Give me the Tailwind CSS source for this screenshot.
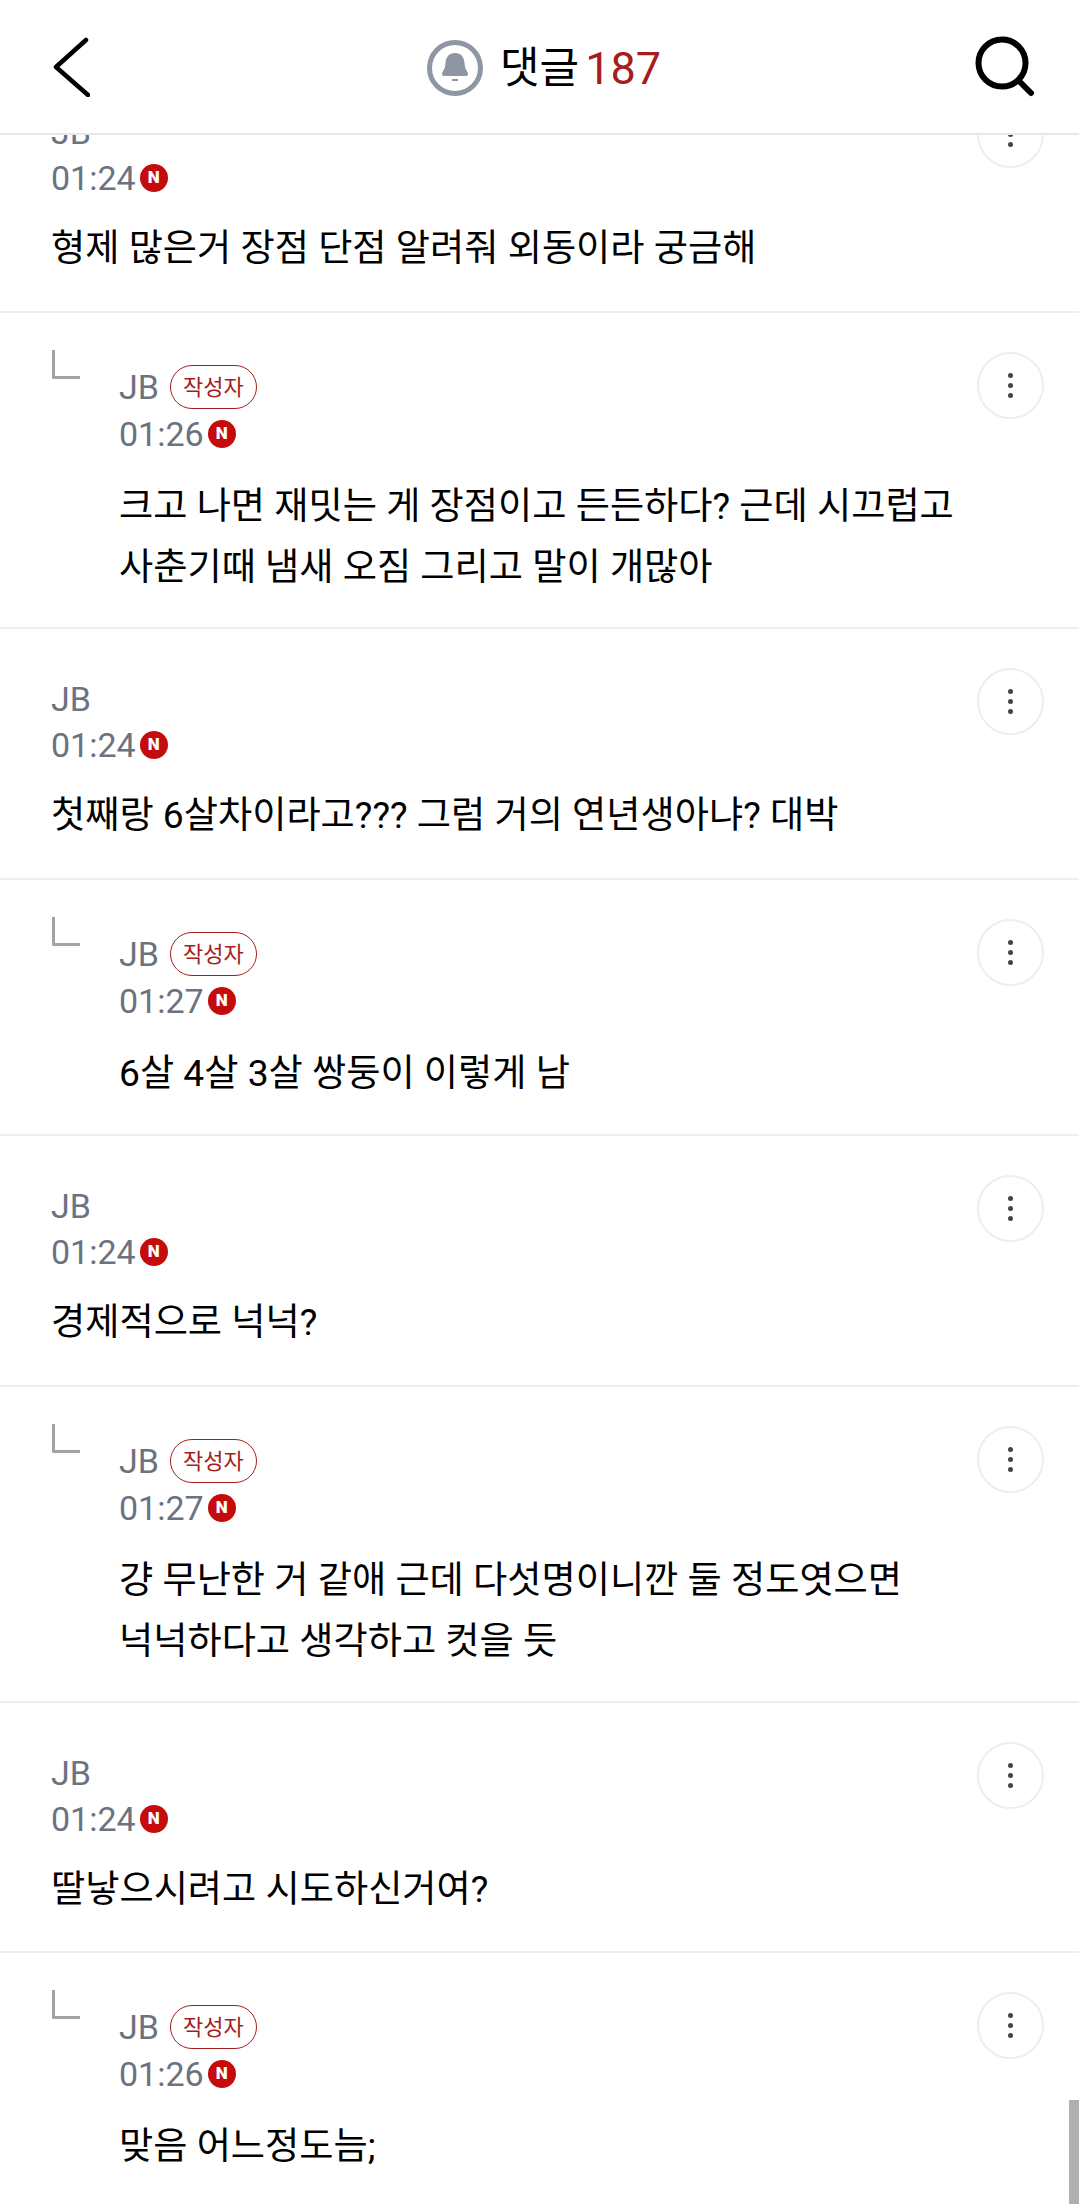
<!DOCTYPE html>
<html lang="ko">
<head>
<meta charset="UTF-8">
<title>댓글</title>
<script src="https://cdn.jsdelivr.net/npm/@tailwindcss/browser@4"></script>
</head>
<body class="bg-white h-[2204px] overflow-hidden relative font-['Roboto','Noto_Sans_CJK_KR',sans-serif] text-black">
<header class="h-[135px] border-b-2 border-[#e8e8e8] flex items-center justify-between pl-[52px] pr-[42px] bg-white relative z-10">
  <svg class="w-[38px] h-[60px]" viewBox="0 0 38 60" fill="none" stroke="#000" stroke-width="4.500" stroke-linecap="round" stroke-linejoin="round"><path d="M34 3 4 30l32 28"/></svg>
  <div class="flex items-center absolute left-[427px] top-[40px]">
    <svg class="w-[56px] h-[56px]" viewBox="0 0 56 56"><circle cx="28" cy="28" r="25.500" fill="none" stroke="#8e95a3" stroke-width="5"/><path d="M28 13c-6 0-9 4-9.500 10-.4 4-1 6-3 9-1 1.800-.5 4 1.500 4h22c2 0 2.500-2.200 1.500-4-2-3-2.600-5-3-9C37 17 34 13 28 13z" fill="#8e95a3"/><rect x="25" y="39" width="6" height="2" fill="#8e95a3"/></svg>
    <span class="ml-[17px] text-[43px] leading-none">댓글</span>
    <span class="ml-[6px] text-[45px] leading-none text-[#a51d1d]">187</span>
  </div>
  <svg class="w-[62px] h-[62px]" viewBox="0 0 62 62" fill="none" stroke="#000" stroke-width="6" stroke-linecap="round"><circle cx="27" cy="27" r="23.500"/><path d="M44 45l12 12"/></svg>
</header>

<main class="-mt-[73px]">
  <section class="h-[251px] border-b-2 border-[#eeeeee] relative pt-[48px] pl-[51px]">
    <div class="text-[34px] leading-[44px] text-[#6b7280]">JB</div>
    <div class="flex items-center gap-[4px] h-[48px]"><span class="text-[34px] text-[#6b7280]">01:24</span><span class="w-[28px] h-[28px] rounded-full bg-[#c50c0c] text-white text-[17px] font-black flex items-center justify-center">N</span></div>
    <p class="mt-[16px] text-[37.200px] leading-[61px]">형제 많은거 장점 단점 알려줘 외동이라 궁금해</p>
    <div class="absolute right-[35px] top-[39px] w-[67px] h-[67px] rounded-full border-2 border-[#eeeeee] flex flex-col items-center justify-center gap-[4.500px]"><i class="w-[5.500px] h-[5.500px] rounded-full bg-[#444]"></i><i class="w-[5.500px] h-[5.500px] rounded-full bg-[#444]"></i><i class="w-[5.500px] h-[5.500px] rounded-full bg-[#444]"></i></div>
  </section>
  <section class="h-[316px] border-b-2 border-[#eeeeee] relative pt-[52px] pl-[119px]">
    <div class="flex items-center h-[44px]"><span class="text-[34px] text-[#6b7280]">JB</span><span class="ml-[11px] w-[87px] h-[44px] rounded-full border-[1.500px] border-[#a51d1d] text-[#a51d1d] text-[22px] flex items-center justify-center">작성자</span></div>
    <div class="flex items-center gap-[4px] h-[48px] mt-[1px]"><span class="text-[34px] text-[#6b7280]">01:26</span><span class="w-[28px] h-[28px] rounded-full bg-[#c50c0c] text-white text-[17px] font-black flex items-center justify-center">N</span></div>
    <p class="mt-[18px] text-[37.200px] leading-[61px]">크고 나면 재밋는 게 장점이고 든든하다? 근데 시끄럽고<br>사춘기때 냄새 오짐 그리고 말이 개많아</p>
    <span class="absolute left-[52px] top-[37px] w-[28px] h-[29px] border-l-[3px] border-b-[3px] border-[#a3a3a3] rounded-bl-[2px]"></span>
    <div class="absolute right-[35px] top-[39px] w-[67px] h-[67px] rounded-full border-2 border-[#eeeeee] flex flex-col items-center justify-center gap-[4.500px]"><i class="w-[5.500px] h-[5.500px] rounded-full bg-[#444]"></i><i class="w-[5.500px] h-[5.500px] rounded-full bg-[#444]"></i><i class="w-[5.500px] h-[5.500px] rounded-full bg-[#444]"></i></div>
  </section>
  <section class="h-[251px] border-b-2 border-[#eeeeee] relative pt-[48px] pl-[51px]">
    <div class="text-[34px] leading-[44px] text-[#6b7280]">JB</div>
    <div class="flex items-center gap-[4px] h-[48px]"><span class="text-[34px] text-[#6b7280]">01:24</span><span class="w-[28px] h-[28px] rounded-full bg-[#c50c0c] text-white text-[17px] font-black flex items-center justify-center">N</span></div>
    <p class="mt-[16px] text-[37.200px] leading-[61px]">첫째랑 6살차이라고??? 그럼 거의 연년생아냐? 대박</p>
    <div class="absolute right-[35px] top-[39px] w-[67px] h-[67px] rounded-full border-2 border-[#eeeeee] flex flex-col items-center justify-center gap-[4.500px]"><i class="w-[5.500px] h-[5.500px] rounded-full bg-[#444]"></i><i class="w-[5.500px] h-[5.500px] rounded-full bg-[#444]"></i><i class="w-[5.500px] h-[5.500px] rounded-full bg-[#444]"></i></div>
  </section>
  <section class="h-[256px] border-b-2 border-[#eeeeee] relative pt-[52px] pl-[119px]">
    <div class="flex items-center h-[44px]"><span class="text-[34px] text-[#6b7280]">JB</span><span class="ml-[11px] w-[87px] h-[44px] rounded-full border-[1.500px] border-[#a51d1d] text-[#a51d1d] text-[22px] flex items-center justify-center">작성자</span></div>
    <div class="flex items-center gap-[4px] h-[48px] mt-[1px]"><span class="text-[34px] text-[#6b7280]">01:27</span><span class="w-[28px] h-[28px] rounded-full bg-[#c50c0c] text-white text-[17px] font-black flex items-center justify-center">N</span></div>
    <p class="mt-[18px] text-[37.200px] leading-[61px]">6살 4살 3살 쌍둥이 이렇게 남</p>
    <span class="absolute left-[52px] top-[37px] w-[28px] h-[29px] border-l-[3px] border-b-[3px] border-[#a3a3a3] rounded-bl-[2px]"></span>
    <div class="absolute right-[35px] top-[39px] w-[67px] h-[67px] rounded-full border-2 border-[#eeeeee] flex flex-col items-center justify-center gap-[4.500px]"><i class="w-[5.500px] h-[5.500px] rounded-full bg-[#444]"></i><i class="w-[5.500px] h-[5.500px] rounded-full bg-[#444]"></i><i class="w-[5.500px] h-[5.500px] rounded-full bg-[#444]"></i></div>
  </section>
  <section class="h-[251px] border-b-2 border-[#eeeeee] relative pt-[48px] pl-[51px]">
    <div class="text-[34px] leading-[44px] text-[#6b7280]">JB</div>
    <div class="flex items-center gap-[4px] h-[48px]"><span class="text-[34px] text-[#6b7280]">01:24</span><span class="w-[28px] h-[28px] rounded-full bg-[#c50c0c] text-white text-[17px] font-black flex items-center justify-center">N</span></div>
    <p class="mt-[16px] text-[37.200px] leading-[61px]">경제적으로 넉넉?</p>
    <div class="absolute right-[35px] top-[39px] w-[67px] h-[67px] rounded-full border-2 border-[#eeeeee] flex flex-col items-center justify-center gap-[4.500px]"><i class="w-[5.500px] h-[5.500px] rounded-full bg-[#444]"></i><i class="w-[5.500px] h-[5.500px] rounded-full bg-[#444]"></i><i class="w-[5.500px] h-[5.500px] rounded-full bg-[#444]"></i></div>
  </section>
  <section class="h-[316px] border-b-2 border-[#eeeeee] relative pt-[52px] pl-[119px]">
    <div class="flex items-center h-[44px]"><span class="text-[34px] text-[#6b7280]">JB</span><span class="ml-[11px] w-[87px] h-[44px] rounded-full border-[1.500px] border-[#a51d1d] text-[#a51d1d] text-[22px] flex items-center justify-center">작성자</span></div>
    <div class="flex items-center gap-[4px] h-[48px] mt-[1px]"><span class="text-[34px] text-[#6b7280]">01:27</span><span class="w-[28px] h-[28px] rounded-full bg-[#c50c0c] text-white text-[17px] font-black flex items-center justify-center">N</span></div>
    <p class="mt-[18px] text-[37.200px] leading-[61px]">걍 무난한 거 같애 근데 다섯명이니깐 둘 정도엿으면<br>넉넉하다고 생각하고 컷을 듯</p>
    <span class="absolute left-[52px] top-[37px] w-[28px] h-[29px] border-l-[3px] border-b-[3px] border-[#a3a3a3] rounded-bl-[2px]"></span>
    <div class="absolute right-[35px] top-[39px] w-[67px] h-[67px] rounded-full border-2 border-[#eeeeee] flex flex-col items-center justify-center gap-[4.500px]"><i class="w-[5.500px] h-[5.500px] rounded-full bg-[#444]"></i><i class="w-[5.500px] h-[5.500px] rounded-full bg-[#444]"></i><i class="w-[5.500px] h-[5.500px] rounded-full bg-[#444]"></i></div>
  </section>
  <section class="h-[250px] border-b-2 border-[#eeeeee] relative pt-[48px] pl-[51px]">
    <div class="text-[34px] leading-[44px] text-[#6b7280]">JB</div>
    <div class="flex items-center gap-[4px] h-[48px]"><span class="text-[34px] text-[#6b7280]">01:24</span><span class="w-[28px] h-[28px] rounded-full bg-[#c50c0c] text-white text-[17px] font-black flex items-center justify-center">N</span></div>
    <p class="mt-[16px] text-[37.200px] leading-[61px]">딸낳으시려고 시도하신거여?</p>
    <div class="absolute right-[35px] top-[39px] w-[67px] h-[67px] rounded-full border-2 border-[#eeeeee] flex flex-col items-center justify-center gap-[4.500px]"><i class="w-[5.500px] h-[5.500px] rounded-full bg-[#444]"></i><i class="w-[5.500px] h-[5.500px] rounded-full bg-[#444]"></i><i class="w-[5.500px] h-[5.500px] rounded-full bg-[#444]"></i></div>
  </section>
  <section class="h-[256px] relative pt-[52px] pl-[119px]">
    <div class="flex items-center h-[44px]"><span class="text-[34px] text-[#6b7280]">JB</span><span class="ml-[11px] w-[87px] h-[44px] rounded-full border-[1.500px] border-[#a51d1d] text-[#a51d1d] text-[22px] flex items-center justify-center">작성자</span></div>
    <div class="flex items-center gap-[4px] h-[48px] mt-[1px]"><span class="text-[34px] text-[#6b7280]">01:26</span><span class="w-[28px] h-[28px] rounded-full bg-[#c50c0c] text-white text-[17px] font-black flex items-center justify-center">N</span></div>
    <p class="mt-[18px] text-[37.200px] leading-[61px]">맞음 어느정도늠;</p>
    <span class="absolute left-[52px] top-[37px] w-[28px] h-[29px] border-l-[3px] border-b-[3px] border-[#a3a3a3] rounded-bl-[2px]"></span>
    <div class="absolute right-[35px] top-[39px] w-[67px] h-[67px] rounded-full border-2 border-[#eeeeee] flex flex-col items-center justify-center gap-[4.500px]"><i class="w-[5.500px] h-[5.500px] rounded-full bg-[#444]"></i><i class="w-[5.500px] h-[5.500px] rounded-full bg-[#444]"></i><i class="w-[5.500px] h-[5.500px] rounded-full bg-[#444]"></i></div>
  </section>
</main>
<div class="absolute right-0 top-[2100px] w-[10px] h-[104px] bg-[#b0b0b0]"></div>
</body>
</html>
